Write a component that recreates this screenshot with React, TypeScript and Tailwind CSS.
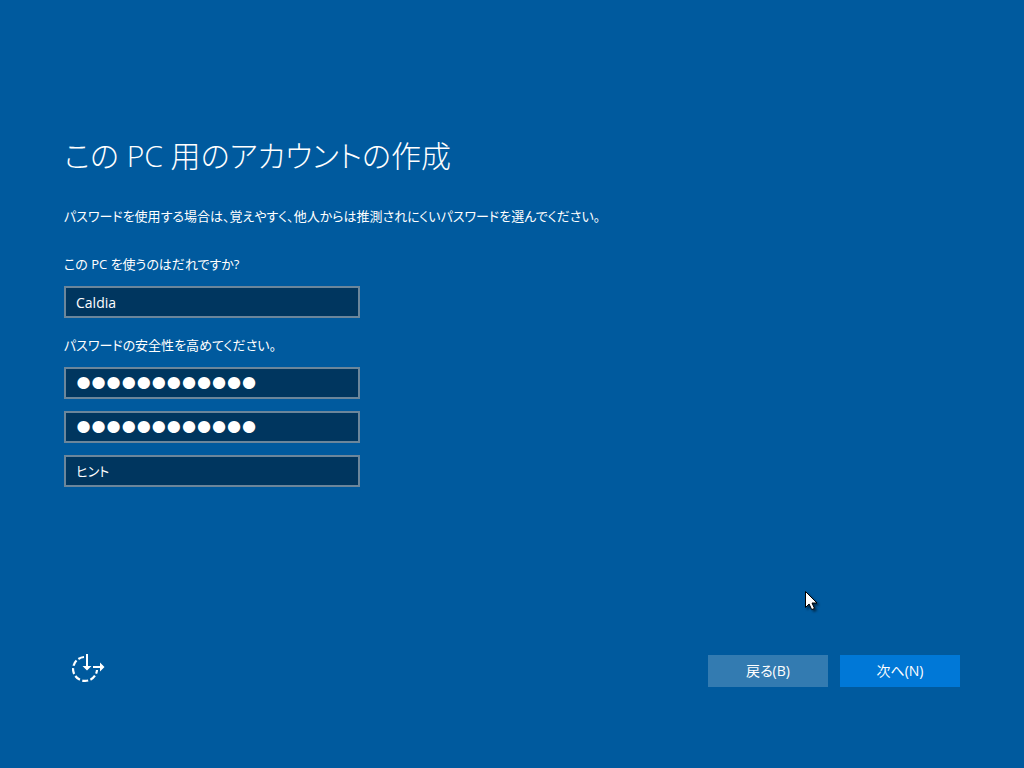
import React from 'react';

const fieldClass =
    'block h-8 w-full border-2 border-[#6b869b] bg-[#00365f] px-2.5 text-white placeholder:text-white placeholder:opacity-100 focus:outline-none';

// the bullets are drawn from a large font size and thickened with a stroke
const passwordClass = `${fieldClass} pb-0.5 font-['Liberation_Serif',serif] text-[43px] [-webkit-text-stroke:2px_white]`;

function EaseOfAccessIcon() {
    return (
        <svg viewBox="0 0 34 36" className="h-9 w-[34px]" fill="none" stroke="currentColor" aria-hidden="true">
            <path
                d="M12 4A12 12 0 1 0 25 17"
                strokeWidth="2.2"
                strokeDasharray="6 2.4"
            />
            <path d="M15 1v13M21 14h8" strokeWidth="2" />
            <path d="M10.5 13h9L15 17.5zM28 9.5v9l4.5-4.5z" fill="currentColor" stroke="none" />
        </svg>
    );
}

function Cursor() {
    return (
        <svg
            viewBox="0 0 16 22"
            className="pointer-events-none absolute left-[805px] top-[591px] h-[22px] w-4 drop-shadow-[2px_2px_1px_rgba(0,0,0,0.5)]"
            aria-hidden="true"
        >
            <path
                d="M.5.5v16l3.6-3.5 2.6 5.6 2.8-1.2L7 12h5z"
                fill="#fff"
                stroke="#000"
            />
        </svg>
    );
}

export default function App() {
    return (
        <div className="relative flex min-h-screen w-full flex-col bg-[#005a9e] px-16 pb-[79px] pt-[132px] font-['Open_Sans','Noto_Sans_CJK_JP',sans-serif] text-[14px] leading-5 text-white [font-feature-settings:'palt']">
            <form className="flex flex-1 flex-col" onSubmit={(e) => e.preventDefault()}>
                <main className="flex-1 text-[13px]">
                    <h1 className="text-[30px] font-light leading-12">この PC 用のアカウントの作成</h1>
                    <p className="mt-[26px]">
                        パスワードを使用する場合は、覚えやすく、他人からは推測されにくいパスワードを選んでください。
                    </p>

                    <div className="mt-7 w-[296px]">
                        <label htmlFor="user" className="block">この PC を使うのはだれですか?</label>
                        <input id="user" type="text" defaultValue="Caldia" className={`${fieldClass} mt-3 text-[14px]`} />
                    </div>

                    <div className="mt-[17px] w-[296px]">
                        <label htmlFor="password" className="block">パスワードの安全性を高めてください。</label>
                        <div className="mt-3 space-y-3">
                            <input id="password" type="password" defaultValue="caldia-20155" className={passwordClass} />
                            <input
                                type="password"
                                aria-label="パスワードの確認"
                                defaultValue="caldia-20155"
                                className={passwordClass}
                            />
                            <input type="text" aria-label="ヒント" placeholder="ヒント" className={fieldClass} />
                        </div>
                    </div>
                </main>

                <footer className="flex items-center justify-between">
                    <button type="button" aria-label="コンピューターの簡単操作" className="ml-2">
                        <EaseOfAccessIcon />
                    </button>
                    <div className="flex gap-3">
                        <button type="button" className="h-8 w-[120px] bg-[#337bb1]">戻る(B)</button>
                        <button type="submit" className="h-8 w-[120px] bg-[#0078d7]">次へ(N)</button>
                    </div>
                </footer>
            </form>
            <Cursor />
        </div>
    );
}
